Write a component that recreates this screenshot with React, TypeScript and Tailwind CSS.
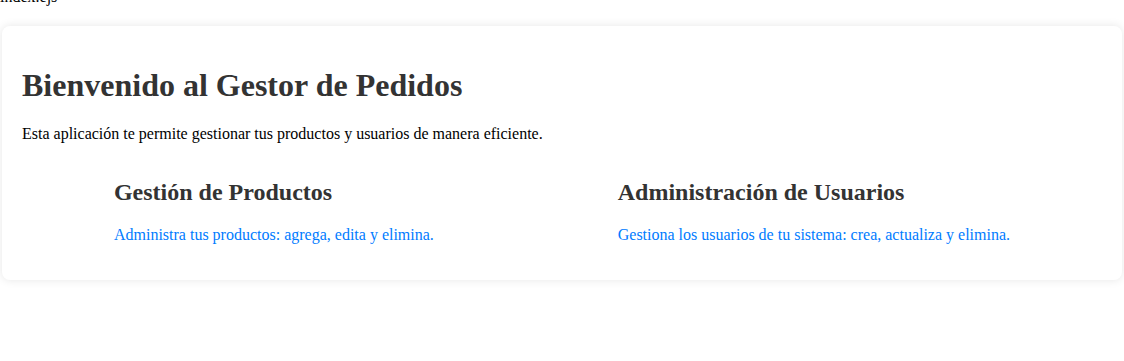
export default function App() {
  return (
    <div className="min-h-[361px] bg-white font-['Liberation_Serif',serif] text-black">
      <div className="mt-[-12px] text-[16px] leading-[18px]">index.ejs</div>

      <div className="mx-[2px] mt-[20px] rounded-lg bg-white p-5 shadow-[0_0_10px_rgba(0,0,0,0.1)]">
        <h1 className="mt-[21.44px] mb-[21.44px] text-[32px] font-bold leading-[36px] text-[#333]">
          Bienvenido al Gestor de Pedidos
        </h1>
        <p className="mb-4 text-[16px] leading-[18px]">
          Esta aplicación te permite gestionar tus productos y usuarios de manera eficiente.
        </p>

        <div className="flex justify-around">
          <section>
            <h2 className="my-[19.92px] text-[24px] font-bold leading-[27px] text-[#333]">
              Gestión de Productos
            </h2>
            <p className="mb-4 text-[16px] leading-[18px] text-[#007bff]">
              Administra tus productos: agrega, edita y elimina.
            </p>
          </section>
          <section>
            <h2 className="my-[19.92px] text-[24px] font-bold leading-[27px] text-[#333]">
              Administración de Usuarios
            </h2>
            <p className="mb-4 text-[16px] leading-[18px] text-[#007bff]">
              Gestiona los usuarios de tu sistema: crea, actualiza y elimina.
            </p>
          </section>
        </div>
      </div>
    </div>
  );
}
